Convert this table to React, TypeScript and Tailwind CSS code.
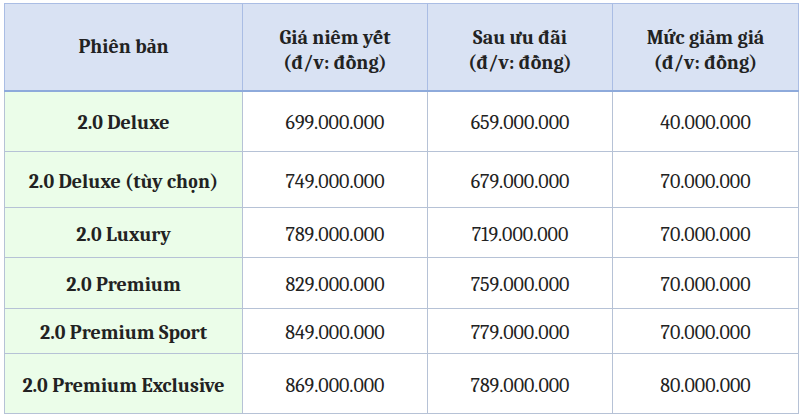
import React from 'react'

const rows = [
  { name: '2.0 Deluxe', list: '699.000.000', sale: '659.000.000', off: '40.000.000', h: 'h-[61px]' },
  { name: '2.0 Deluxe (tùy chọn)', list: '749.000.000', sale: '679.000.000', off: '70.000.000', h: 'h-[56px]' },
  { name: '2.0 Luxury', list: '789.000.000', sale: '719.000.000', off: '70.000.000', h: 'h-[50px]' },
  { name: '2.0 Premium', list: '829.000.000', sale: '759.000.000', off: '70.000.000', h: 'h-[51px]' },
  { name: '2.0 Premium Sport', list: '849.000.000', sale: '779.000.000', off: '70.000.000', h: 'h-[45px]' },
  { name: '2.0 Premium Exclusive', list: '869.000.000', sale: '789.000.000', off: '80.000.000', h: 'h-[60px]' },
]

// header cells; two-line ones sit a touch lower than centre
const th = 'border border-[#aabde4] border-b-2 border-b-[#8eaadb] bg-[#d9e2f3] font-bold text-center align-middle px-0 pb-0'
const td = 'border border-[#b6c2d6] text-center align-middle px-0 pt-[3px] pb-0'

export default function App() {
  return (
    <div className="w-[802px] h-[418px] bg-white pt-[3px] pl-[4px] overflow-hidden font-serif text-[20px] leading-[25px] text-[#222]">
      <table className="border-collapse table-fixed w-[794px]">
        <colgroup>
          <col className="w-[238px]" />
          <col className="w-[185px]" />
          <col className="w-[185px]" />
          <col className="w-[186px]" />
        </colgroup>
        <thead>
          <tr className="h-[87px]">
            <th className={`${th} pt-0`}>Phiên bản</th>
            <th className={`${th} pt-[6px]`}>
              Giá niêm yết
              <br />
              (đ/v: đồng)
            </th>
            <th className={`${th} pt-[6px]`}>
              Sau ưu đãi
              <br />
              (đ/v: đồng)
            </th>
            <th className={`${th} pt-[6px]`}>
              Mức giảm giá
              <br />
              (đ/v: đồng)
            </th>
          </tr>
        </thead>
        <tbody>
          {rows.map((r) => (
            <tr key={r.name} className={r.h}>
              <td className={`${td} bg-[#ebfde9] font-bold`}>{r.name}</td>
              <td className={td}>{r.list}</td>
              <td className={td}>{r.sale}</td>
              <td className={td}>{r.off}</td>
            </tr>
          ))}
        </tbody>
      </table>
    </div>
  )
}
